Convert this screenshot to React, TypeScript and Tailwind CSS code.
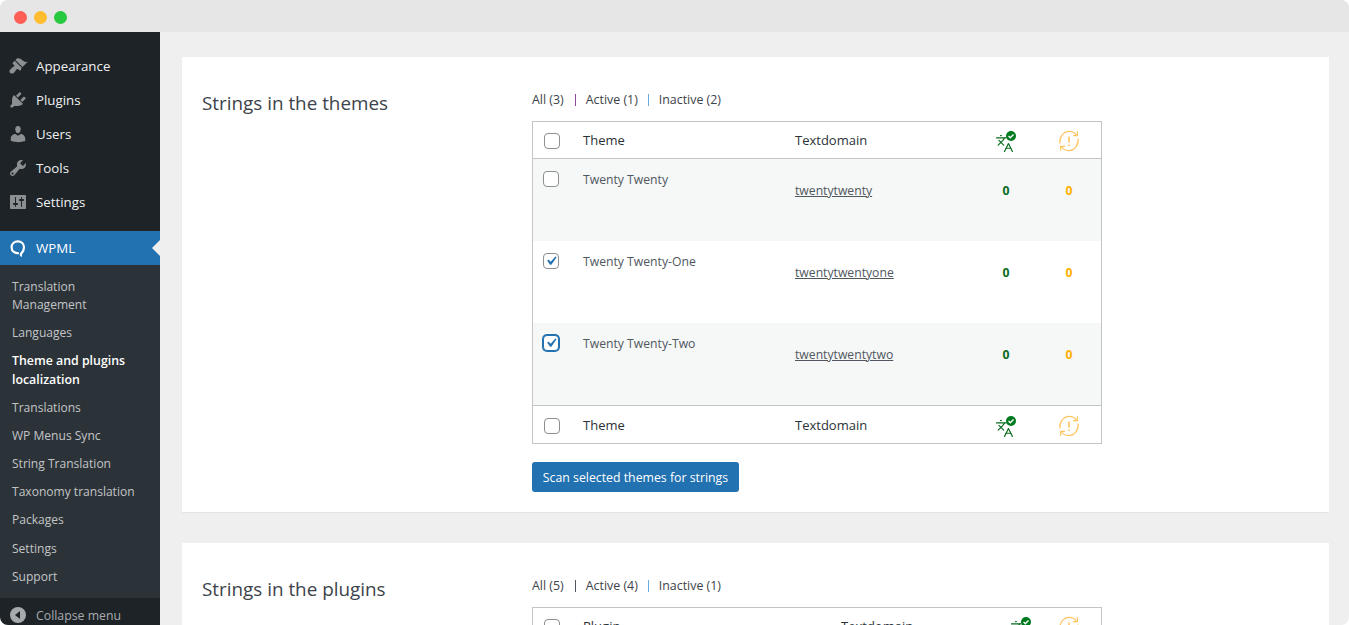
import React from "react";
import { Languages } from "lucide-react";

const topMenu = [
  { label: "Appearance", d: "M14.48 11.06L7.41 3.99l1.5-1.5c.5-.56 2.3-.47 3.51.32 1.21.8 1.43 1.28 2.91 2.1 1.18.64 2.45 1.26 4.45.85zm-.71.71L6.7 4.7 4.93 6.47c-.39.39-.39 1.02 0 1.41l1.06 1.06c.39.39.39 1.03 0 1.42-.6.6-1.43 1.11-2.21 1.69-.35.26-.7.53-1.01.84C1.43 13.71.96 15.65 2.2 16.89s3.19.77 4.03-.45c.26-.31.53-.66.79-1.01.58-.78 1.09-1.61 1.69-2.21.39-.39 1.03-.39 1.42 0l1.06 1.06c.39.39 1.02.39 1.41 0z" },
  { label: "Plugins", d: "M13.11 4.36L9.87 7.6 8 5.73l3.24-3.24c.35-.34 1.05-.2 1.56.32.52.51.66 1.21.31 1.55zm-8 1.77l.91-1.12 9.01 9.01-1.19.84c-.71.71-2.63 1.16-3.82 1.16H6.14L4.9 17.26c-.59.59-1.54.59-2.12 0-.59-.58-.59-1.53 0-2.12l1.24-1.24v-3.88c0-1.13.4-3.19 1.09-3.89zm7.26 3.97l3.24-3.24c.34-.35 1.04-.21 1.55.31.52.51.66 1.21.31 1.55l-3.24 3.25z" },
  { label: "Users", d: "M10 9.25c-2.27 0-2.73-3.44-2.73-3.44C7 4.02 7.82 2 9.97 2c2.16 0 2.98 2.02 2.71 3.81 0 0-.41 3.44-2.68 3.44zm0 2.57L12.72 10c2.39 0 4.52 2.33 4.52 4.53v2.49s-3.65 1.13-7.24 1.13c-3.65 0-7.24-1.13-7.24-1.13v-2.49c0-2.25 1.94-4.48 4.47-4.48z" },
  { label: "Tools", d: "M16.68 9.77c-1.34 1.34-3.3 1.67-4.95.99l-5.41 6.52c-.99.99-2.59.99-3.58 0s-.99-2.59 0-3.57l6.52-5.42c-.68-1.65-.35-3.61.99-4.95 1.28-1.28 3.12-1.62 4.72-1.06l-2.89 2.89 2.82 2.82 2.86-2.87c.53 1.58.18 3.39-1.08 4.65zM3.81 16.21c.4.39 1.04.39 1.43 0 .4-.4.4-1.04 0-1.43-.39-.4-1.03-.4-1.43 0-.39.39-.39 1.03 0 1.43z" },
  { label: "Settings", d: "M18 16V4c0-.55-.45-1-1-1H3c-.55 0-1 .45-1 1v12c0 .55.45 1 1 1h14c.55 0 1-.45 1-1zM8 11h1c.55 0 1 .45 1 1s-.45 1-1 1H8v1.5c0 .28-.22.5-.5.5s-.5-.22-.5-.5V13H6c-.55 0-1-.45-1-1s.45-1 1-1h1V5.5c0-.28.22-.5.5-.5s.5.22.5.5V11zm5-2h-1c-.55 0-1-.45-1-1s.45-1 1-1h1V5.5c0-.28.22-.5.5-.5s.5.22.5.5V7h1c.55 0 1 .45 1 1s-.45 1-1 1h-1v5.5c0 .28-.22.5-.5.5s-.5-.22-.5-.5V9z" },
];

const subMenu = [
  { label: "Translation Management" },
  { label: "Languages" },
  { label: "Theme and plugins localization", active: true },
  { label: "Translations" },
  { label: "WP Menus Sync" },
  { label: "String Translation" },
  { label: "Taxonomy translation" },
  { label: "Packages" },
  { label: "Settings" },
  { label: "Support" },
];

const themes = [
  { name: "Twenty Twenty", domain: "twentytwenty", checked: false, focus: false, striped: true },
  { name: "Twenty Twenty-One", domain: "twentytwentyone", checked: true, focus: false, striped: false },
  { name: "Twenty Twenty-Two", domain: "twentytwentytwo", checked: true, focus: true, striped: true },
];

function Checkbox({ checked, focus }: { checked?: boolean; focus?: boolean }) {
  return (
    <span
      className={
        "flex w-4 h-4 items-center justify-center rounded-[4px] bg-white border " +
        (focus ? "border-[#2271b1] ring-1 ring-[#2271b1]" : "border-[#8c8f94]")
      }
    >
      {checked && (
        <svg viewBox="0 0 20 20" className="w-[18px] h-[18px] shrink-0">
          <path d="M14.83 4.89l1.34.94-5.81 8.38H9.02L5.78 9.67l1.34-1.25 2.57 2.4z" fill="#2271b1" />
        </svg>
      )}
    </span>
  );
}

function TranslatedIcon() {
  return (
    <span className="relative block w-[22px] h-[20px]">
      <Languages className="absolute left-0 bottom-[-2px] w-[19px] h-[19px] text-[#0a6b1e]" strokeWidth={1.5} />
      <svg viewBox="0 0 10 10" className="absolute right-[1px] top-0 w-[10px] h-[10px]">
        <circle cx="5" cy="5" r="5" fill="#007a1f" />
        <path d="M2.6 5l1.7 1.7 3.2-3.2" fill="none" stroke="#fff" strokeWidth="1.4" />
      </svg>
    </span>
  );
}

function NeedsUpdateIcon() {
  return (
    <svg viewBox="0 0 22 22" className="w-[22px] h-[22px]" fill="none" stroke="#ffc560" strokeWidth="1.2">
      <path d="M2 13.5C.9 8 5 1.4 11.2 1.4c3.2 0 5.6 1.4 7.2 3.6" />
      <path d="M20 8.5c1.1 5.5-3 12.1-9.2 12.1-3.2 0-5.6-1.4-7.2-3.6" />
      <path d="M19.4 1.2v4.4H15M2.6 20.8v-4.4H7" />
      <path d="M11 6.5v6M11 14.5v1.5" strokeWidth="1.6" />
    </svg>
  );
}

function HeadRow({ label, top, plugin }: { label: string; top?: boolean; plugin?: boolean }) {
  return (
    <div
      className={
        "grid items-center text-[13px] text-[#2c3338] " +
        (plugin ? "grid-cols-[50px_258px_149px_62px_34px] " : "grid-cols-[50px_212px_180px_62px_64px] ") +
        (top ? "h-[37px] pt-[1px] border-b border-[#c3c4c7]" : "h-[38px] pt-[2px] border-t border-[#c3c4c7]")
      }
    >
      <span className="pl-[11px]">
        <Checkbox />
      </span>
      <span>{label}</span>
      <span>Textdomain</span>
      <span className="flex justify-center">
        <TranslatedIcon />
      </span>
      <span className="flex justify-center">
        <NeedsUpdateIcon />
      </span>
    </div>
  );
}

function Filters({ all, active, inactive, sepColor }: { all: number; active: number; inactive: number; sepColor: string }) {
  return (
    <div className="flex items-center h-[20px] text-[12.4px] text-[#3c434a]">
      <span>All ({all})</span>
      <span className={"ml-[11px] mr-[10px] w-[1px] h-[12px] " + sepColor} />
      <span>Active ({active})</span>
      <span className="ml-[10px] mr-[10px] w-[1px] h-[12px] bg-[#6aa9dc]" />
      <span>Inactive ({inactive})</span>
    </div>
  );
}

export default function App() {
  return (
    <div className="w-[1349px] h-[625px] overflow-hidden rounded-[8px] flex flex-col bg-[#efefef] font-['Open_Sans',sans-serif]">
      {/* Window bar */}
      <div className="h-[32px] shrink-0 bg-[#e6e6e6] flex items-center gap-[7px] pl-[13.5px] pt-[2px]">
        <span className="w-[13px] h-[13px] rounded-full bg-[#ff5f57]" />
        <span className="w-[13px] h-[13px] rounded-full bg-[#febc2e]" />
        <span className="w-[13px] h-[13px] rounded-full bg-[#28c840]" />
      </div>

      <div className="flex flex-1 min-h-0">
        {/* Admin menu */}
        <aside className="w-[160px] shrink-0 bg-[#1d2327] flex flex-col pt-[17px]">
          {topMenu.map((item) => (
            <div key={item.label} className="h-[34px] flex items-center pl-[8px] text-[13.3px] text-[#f0f0f1]">
              <svg viewBox="0 0 20 20" className="w-[20px] h-[20px] fill-[#a7aaad] opacity-80">
                <path d={item.d} />
              </svg>
              <span className="ml-[8px] pt-[1px]">{item.label}</span>
            </div>
          ))}

          <div className="relative mt-[12px] h-[34px] bg-[#2271b1] flex items-center pl-[8px] text-[13.3px] text-white">
            <svg viewBox="0 0 20 20" className="w-[20px] h-[20px]" fill="none" stroke="#fff" strokeWidth="2.2">
              <path d="M11 15.2C7 15.6 3.6 13.2 3.6 9.4 3.6 5.8 6.4 3.4 9.8 3.4c3.5 0 6.2 2.4 6.2 5.8 0 2.6-1.2 4.8-2.6 6.2-.9.9-.5 2.2.6 2.2" />
            </svg>
            <span className="ml-[8px] pt-[1px]">WPML</span>
            <span className="absolute right-0 top-[9px] w-0 h-0 border-y-[8px] border-y-transparent border-r-[8px] border-r-[#f0f0f1]" />
          </div>

          <ul className="flex-1 bg-[#2c3338] pt-[7.5px] text-[12.05px] leading-[18.2px] text-[#c3c4c7]">
            {subMenu.map((item) => (
              <li
                key={item.label}
                className={
                  "pl-[12px] pr-[20px] " +
                  (item.active ? "pt-[4px] pb-[4.4px] leading-[19px] text-[12.35px] font-semibold text-white" : "py-[5px]")
                }
              >
                {item.label}
              </li>
            ))}
          </ul>

          <div className="h-[27px] shrink-0 flex items-start pl-[10px] pt-[9px] text-[12.3px] leading-[18px] text-[#a7aaad]">
            <span className="w-[16px] h-[16px] rounded-full bg-[#a7aaad] flex items-center justify-center">
              <span className="w-0 h-0 border-y-[4px] border-y-transparent border-r-[5px] border-r-[#1d2327] mr-[1px]" />
            </span>
            <span className="ml-[10px]">Collapse menu</span>
          </div>
        </aside>

        {/* Content */}
        <main className="flex-1 min-w-0 pl-[22px] pr-[20px] pt-[25px]">
          <section className="h-[455px] bg-white shadow-[0_1px_1px_rgba(0,0,0,0.04)] flex pt-[33px]">
            <h2 className="w-[350px] shrink-0 pl-[20px] text-[18.85px] leading-[26px] text-[#3c434a]">Strings in the themes</h2>
            <div className="w-[570px]">
              <Filters all={3} active={1} inactive={2} sepColor="bg-[#8b4a9c]" />
              <div className="mt-[11px] border border-[#c3c4c7]">
                <HeadRow label="Theme" top />
                {themes.map((t) => (
                  <div
                    key={t.name}
                    className={
                      "h-[82px] grid grid-cols-[50px_212px_180px_62px_64px] text-[12.2px] text-[#50575e] " +
                      (t.striped ? "bg-[#f6f7f7]" : "bg-white")
                    }
                  >
                    <span className="pl-[10px] pt-[12px]">
                      <Checkbox checked={t.checked} focus={t.focus} />
                    </span>
                    <span className="pt-[12px] leading-[17px]">{t.name}</span>
                    <span className="pt-[23px] leading-[17px] underline">{t.domain}</span>
                    <span className="pt-[23px] leading-[17px] text-center font-bold text-[#0a6b1e]">0</span>
                    <span className="pt-[23px] leading-[17px] text-center font-bold text-[#ffb100]">0</span>
                  </div>
                ))}
                <HeadRow label="Theme" />
              </div>
              <button className="mt-[18px] h-[30px] w-[207px] pt-[2px] rounded-[3px] bg-[#2271b1] text-[12.3px] text-white">
                Scan selected themes for strings
              </button>
            </div>
          </section>

          <section className="mt-[31px] h-[200px] bg-white flex pt-[33px]">
            <h2 className="w-[350px] shrink-0 pl-[20px] text-[18.85px] leading-[26px] text-[#3c434a]">Strings in the plugins</h2>
            <div className="w-[570px]">
              <Filters all={5} active={4} inactive={1} sepColor="bg-[#50575e]" />
              <div className="mt-[11px] border border-[#c3c4c7]">
                <HeadRow label="Plugin" top plugin />
              </div>
            </div>
          </section>
        </main>
      </div>
    </div>
  );
}
